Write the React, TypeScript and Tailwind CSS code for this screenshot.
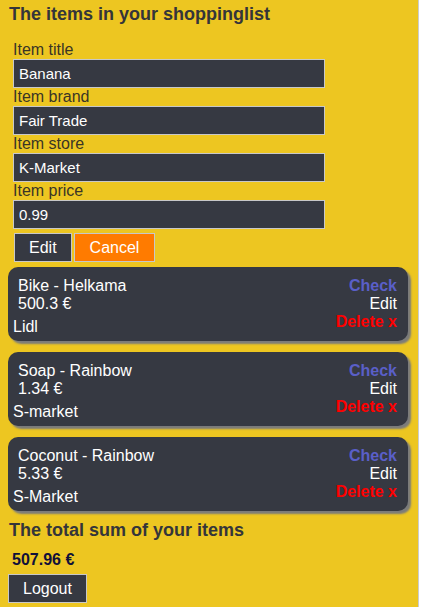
const items = [
  { name: "Bike", brand: "Helkama", price: "500.3", store: "Lidl" },
  { name: "Soap", brand: "Rainbow", price: "1.34", store: "S-market" },
  { name: "Coconut", brand: "Rainbow", price: "5.33", store: "S-Market" },
];

const fields = [
  { label: "Item title", value: "Banana" },
  { label: "Item brand", value: "Fair Trade" },
  { label: "Item store", value: "K-Market" },
  { label: "Item price", value: "0.99" },
];

function ItemCard({ item }: { item: (typeof items)[number] }) {
  return (
    <div className="flex justify-between rounded-[10px] bg-[#363942] pl-[5px] pr-[11px] pt-[10px] h-[74px] shadow-[3px_3px_2px_#7b7b7b] text-[16px] leading-[18px] text-white">
      <div>
        <p className="ml-[5px]">
          {item.name} - {item.brand}
        </p>
        <p className="ml-[5px]">{item.price} €</p>
        <p className="mt-[5px]">{item.store}</p>
      </div>
      <div className="flex flex-col items-end">
        <span className="font-bold text-[#5a5fc8]">Check</span>
        <span>Edit</span>
        <span className="font-bold text-[#ff0000]">Delete x</span>
      </div>
    </div>
  );
}

export default function App() {
  return (
    <div className="flex min-h-[607px] bg-white font-['Liberation_Sans',Arial,sans-serif]">
      <div className="w-[419px] bg-[#edc621] border-r border-[#c9ccd1] pl-[8px] pr-[10px] pt-[4px] pb-[3px]">
        <h2 className="ml-[1px] text-[18px] leading-[21px] font-bold text-[#34353a]">
          The items in your shoppinglist
        </h2>

        <div className="mt-[16px] ml-[5px]">
          {fields.map((f) => (
            <div key={f.label}>
              <div className="text-[16px] leading-[18px] text-[#3a3526]">{f.label}</div>
              <input
                readOnly
                value={f.value}
                className="block w-[312px] h-[29px] border border-[#c8c8c8] bg-[#363942] px-[5px] text-[15px] text-white outline-none"
              />
            </div>
          ))}
          <div className="mt-[4px] ml-[1px] flex gap-[2px]">
            <button className="h-[29px] px-[14px] border border-[#c8c8c8] bg-[#363942] text-[16px] text-white">
              Edit
            </button>
            <button className="h-[29px] px-[15px] border border-[#c8c8c8] bg-[#ff7b00] text-[16px] text-white">
              Cancel
            </button>
          </div>
        </div>

        <div className="mt-[5px] flex flex-col gap-[11px]">
          {items.map((it) => (
            <ItemCard key={it.name} item={it} />
          ))}
        </div>

        <h2 className="mt-[9px] ml-[1px] text-[18px] leading-[21px] font-bold text-[#34353a]">
          The total sum of your items
        </h2>
        <p className="mt-[10px] ml-[4px] text-[16px] leading-[18px] font-bold text-[#10103a]">507.96 €</p>
        <button className="mt-[5px] h-[29px] px-[14px] border border-[#c8c8c8] bg-[#363942] text-[16px] text-white">
          Logout
        </button>
      </div>
    </div>
  );
}
